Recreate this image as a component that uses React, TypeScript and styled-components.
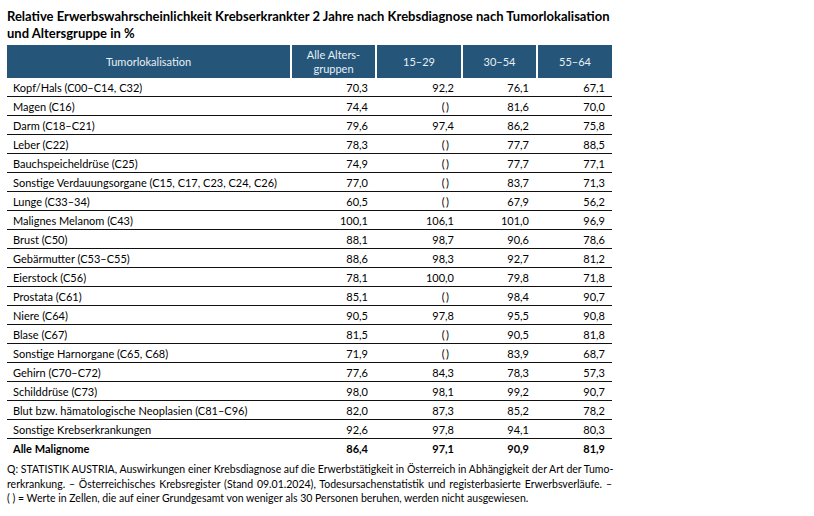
import styled, { createGlobalStyle } from "styled-components";

const ROWS: [string, string, string, string, string][] = [
  ["Kopf/Hals (C00–C14, C32)", "70,3", "92,2", "76,1", "67,1"],
  ["Magen (C16)", "74,4", "()", "81,6", "70,0"],
  ["Darm (C18–C21)", "79,6", "97,4", "86,2", "75,8"],
  ["Leber (C22)", "78,3", "()", "77,7", "88,5"],
  ["Bauchspeicheldrüse (C25)", "74,9", "()", "77,7", "77,1"],
  ["Sonstige Verdauungsorgane (C15, C17, C23, C24, C26)", "77,0", "()", "83,7", "71,3"],
  ["Lunge (C33–34)", "60,5", "()", "67,9", "56,2"],
  ["Malignes Melanom (C43)", "100,1", "106,1", "101,0", "96,9"],
  ["Brust (C50)", "88,1", "98,7", "90,6", "78,6"],
  ["Gebärmutter (C53–C55)", "88,6", "98,3", "92,7", "81,2"],
  ["Eierstock (C56)", "78,1", "100,0", "79,8", "71,8"],
  ["Prostata (C61)", "85,1", "()", "98,4", "90,7"],
  ["Niere (C64)", "90,5", "97,8", "95,5", "90,8"],
  ["Blase (C67)", "81,5", "()", "90,5", "81,8"],
  ["Sonstige Harnorgane (C65, C68)", "71,9", "()", "83,9", "68,7"],
  ["Gehirn (C70–C72)", "77,6", "84,3", "78,3", "57,3"],
  ["Schilddrüse (C73)", "98,0", "98,1", "99,2", "90,7"],
  ["Blut bzw. hämatologische Neoplasien (C81–C96)", "82,0", "87,3", "85,2", "78,2"],
  ["Sonstige Krebserkrankungen", "92,6", "97,8", "94,1", "80,3"],
];

const TOTAL: [string, string, string, string, string] = ["Alle Malignome", "86,4", "97,1", "90,9", "81,9"];

const COLS = "283px 85px 86px 75px 76px";

const GlobalStyle = createGlobalStyle`
  html, body {
    margin: 0;
    background: #ffffff;
  }
  body {
    font-family: Lato, "Open Sans", sans-serif;
    color: #000000;
  }
`;

const Page = styled.div`
  padding: 8px 0 0 7px;
  width: 605px;
`;

const Title = styled.h1`
  margin: 0 0 3px;
  font-size: 13px;
  line-height: 17px;
  font-weight: 700;
  color: #000;
`;

const Table = styled.div`
  display: flex;
  flex-direction: column;
`;

const HeadRow = styled.div`
  display: grid;
  grid-template-columns: ${COLS};
  height: 33px;
  background: #255679;
`;

const HeadCell = styled.div<{ $first?: boolean }>`
  display: flex;
  align-items: center;
  justify-content: center;
  text-align: center;
  color: #e8eff5;
  font-size: 11px;
  line-height: 14px;
  border-left: ${({ $first }) => ($first ? "none" : "2px solid #ffffff")};
`;

const Row = styled.div<{ $last?: boolean }>`
  display: grid;
  grid-template-columns: ${COLS};
  height: 19px;
  box-sizing: border-box;
  border-bottom: ${({ $last }) => ($last ? "none" : "1px solid #111")};
  font-size: 11px;
  font-weight: ${({ $last }) => ($last ? 700 : 400)};
`;

const LabelCell = styled.div`
  display: flex;
  align-items: center;
  padding-left: 6px;
  white-space: nowrap;
`;

const NumCell = styled.div<{ $empty?: boolean }>`
  display: flex;
  align-items: center;
  justify-content: flex-end;
  padding-right: ${({ $empty }) => ($empty ? "12px" : "7px")};
`;

const Footnote = styled.div`
  margin-top: 4px;
  font-size: 10.5px;
  line-height: 14.5px;
`;

const NoteLine = styled.div<{ $justify?: boolean }>`
  text-align: ${({ $justify }) => ($justify ? "justify" : "left")};
  text-align-last: ${({ $justify }) => ($justify ? "justify" : "left")};
  white-space: nowrap;
`;

function DataRow({ cells, last }: { cells: string[]; last?: boolean }) {
  const [label, ...nums] = cells;
  return (
    <Row $last={last}>
      <LabelCell>{label}</LabelCell>
      {nums.map((n, i) => (
        <NumCell key={i} $empty={n === "()"}>
          {n === "()" ? "(\u2009)" : n}
        </NumCell>
      ))}
    </Row>
  );
}

export default function App() {
  return (
    <>
      <GlobalStyle />
      <Page>
        <Title>
          Relative Erwerbswahrscheinlichkeit Krebserkrankter 2 Jahre nach Krebsdiagnose nach Tumorlokalisation
          <br />
          und Altersgruppe in %
        </Title>
        <Table>
          <HeadRow>
            <HeadCell $first>Tumorlokalisation</HeadCell>
            <HeadCell>
              Alle Alters-
              <br />
              gruppen
            </HeadCell>
            <HeadCell>15–29</HeadCell>
            <HeadCell>30–54</HeadCell>
            <HeadCell>55–64</HeadCell>
          </HeadRow>
          {ROWS.map((r) => (
            <DataRow key={r[0]} cells={r} />
          ))}
          <DataRow cells={TOTAL} last />
        </Table>
        <Footnote>
          <NoteLine $justify>
            Q: STATISTIK AUSTRIA, Auswirkungen einer Krebsdiagnose auf die Erwerbstätigkeit in Österreich in Abhängigkeit der Art der Tumo-
          </NoteLine>
          <NoteLine $justify>
            rerkrankung. – Österreichisches Krebsregister (Stand 09.01.2024), Todesursachenstatistik und registerbasierte Erwerbsverläufe. –
          </NoteLine>
          <NoteLine>( ) = Werte in Zellen, die auf einer Grundgesamt von weniger als 30 Personen beruhen, werden nicht ausgewiesen.</NoteLine>
        </Footnote>
      </Page>
    </>
  );
}
